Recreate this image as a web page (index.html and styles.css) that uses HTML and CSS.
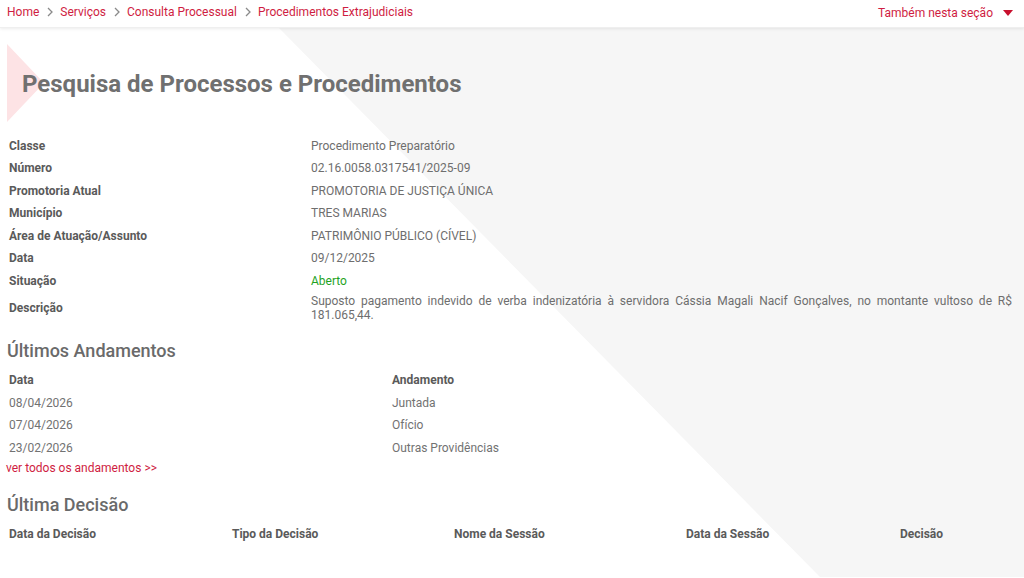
FILE: index.html
```html
<!DOCTYPE html>
<html lang="pt-BR">
<head>
<meta charset="utf-8">
<title>Pesquisa de Processos e Procedimentos</title>
<link rel="stylesheet" href="styles.css">
</head>
<body>
<header class="topbar">
  <nav class="crumbs">
    <a href="#">Home</a>
    <span class="sep"><svg width="8" height="10" viewBox="0 0 8 10"><path d="M2 1 L6 5 L2 9" fill="none" stroke="#8a8a8a" stroke-width="1.3"/></svg></span>
    <a href="#">Serviços</a>
    <span class="sep"><svg width="8" height="10" viewBox="0 0 8 10"><path d="M2 1 L6 5 L2 9" fill="none" stroke="#8a8a8a" stroke-width="1.3"/></svg></span>
    <a href="#">Consulta Processual</a>
    <span class="sep"><svg width="8" height="10" viewBox="0 0 8 10"><path d="M2 1 L6 5 L2 9" fill="none" stroke="#8a8a8a" stroke-width="1.3"/></svg></span>
    <a href="#">Procedimentos Extrajudiciais</a>
  </nav>
  <a href="#" class="section-menu">Também nesta seção<svg class="caret" width="10" height="6" viewBox="0 0 10 6"><path d="M0 0 H10 L5 6 Z" fill="#c8102e"/></svg></a>
</header>
<main class="page">
  <div class="title-block">
    <h1 class="title">Pesquisa de Processos e Procedimentos</h1>
  </div>
  <table class="details">
    <tbody>
      <tr><th>Classe</th><td>Procedimento Preparatório</td></tr>
      <tr><th>Número</th><td>02.16.0058.0317541/2025-09</td></tr>
      <tr><th>Promotoria Atual</th><td>PROMOTORIA DE JUSTIÇA ÚNICA</td></tr>
      <tr><th>Município</th><td>TRES MARIAS</td></tr>
      <tr><th>Área de Atuação/Assunto</th><td>PATRIMÔNIO PÚBLICO (CÍVEL)</td></tr>
      <tr><th>Data</th><td>09/12/2025</td></tr>
      <tr><th>Situação</th><td class="status-open">Aberto</td></tr>
      <tr class="desc-row"><th>Descrição</th><td class="justify">Suposto pagamento indevido de verba indenizatória à servidora Cássia Magali Nacif Gonçalves, no montante vultoso de R$ 181.065,44.</td></tr>
    </tbody>
  </table>

  <h2 class="section-title">Últimos Andamentos</h2>
  <table class="list andamentos">
    <thead><tr><th class="c1">Data</th><th>Andamento</th></tr></thead>
    <tbody>
      <tr><td>08/04/2026</td><td>Juntada</td></tr>
      <tr><td>07/04/2026</td><td>Ofício</td></tr>
      <tr><td>23/02/2026</td><td>Outras Providências</td></tr>
    </tbody>
  </table>
  <a href="#" class="more">ver todos os andamentos &gt;&gt;</a>

  <h2 class="section-title second">Última Decisão</h2>
  <table class="list decisao">
    <thead><tr><th class="d1">Data da Decisão</th><th class="d2">Tipo da Decisão</th><th class="d3">Nome da Sessão</th><th class="d4">Data da Sessão</th><th>Decisão</th></tr></thead>
  </table>
</main>
</body>
</html>
```
FILE: styles.css
```css
html, body {
  margin: 0;
  padding: 0;
}
body {
  font-family: Roboto, "Liberation Sans", Arial, sans-serif;
  background: #ffffff;
  color: #666666;
  height: 578px;
  overflow: hidden;
}
a { text-decoration: none; }

.topbar {
  position: relative;
  z-index: 2;
  height: 28px;
  background: #ffffff;
  box-shadow: 0 1px 3px rgba(0, 0, 0, 0.08);
  border-bottom: 1px solid #efefef;
  display: flex;
  align-items: center;
  justify-content: space-between;
  padding: 0 11px 0 7px;
  box-sizing: border-box;
}
.crumbs {
  display: flex;
  align-items: center;
  font-size: 12px;
  margin-top: -4px;
}
.crumbs a { color: #cf1d42; }
.sep {
  display: inline-flex;
  align-items: center;
  margin: 0 6px 0 7px;
}
.section-menu {
  color: #cf1d42;
  font-size: 12px;
  display: flex;
  align-items: center;
  margin-top: -2px;
}
.caret { margin-left: 10px; }

.page {
  position: relative;
  min-height: 549px;
  padding: 16px 7px 0 7px;
  box-sizing: border-box;
}
.page::before {
  content: "";
  position: absolute;
  inset: 0;
  background: #f6f6f6;
  clip-path: polygon(279px 0, 100% 0, 100% 100%, 820px 100%);
  z-index: 0;
}
.page > * { position: relative; z-index: 1; }

.title-block {
  height: 78px;
  display: flex;
  align-items: center;
  padding-left: 15px;
}
.title-block::before {
  content: "";
  position: absolute;
  left: 0;
  top: 0;
  width: 37px;
  height: 78px;
  background: #fde3e5;
  clip-path: polygon(0 0, 100% 50%, 0 100%);
}
.title {
  position: relative;
  margin: 2px 0 0 0;
  font-size: 24px;
  font-weight: 700;
  color: #707070;
  letter-spacing: 0;
}

.details {
  border-collapse: collapse;
  width: 1007px;
  margin-top: 12.5px;
  font-size: 12px;
}
.details th, .details td {
  padding: 4px 2px;
  line-height: 14.5px;
  vertical-align: middle;
  text-align: left;
}
.details th {
  width: 298px;
  font-weight: 700;
  color: #5a5a5a;
}
.details td { color: #6e6e6e; }
.details .desc-row th, .details .desc-row td { line-height: 14px; padding-top: 2px; padding-bottom: 2px; }
.justify { text-align: justify !important; }
.status-open { color: #1fa31f !important; }

.section-title {
  margin: 16px 0 7px 0;
  font-size: 18px;
  line-height: 22px;
  font-weight: 500;
  color: #6a6a6a;
}
.section-title.second { margin-top: 18px; margin-bottom: 7px; }

.list {
  border-collapse: collapse;
  width: 1010px;
  font-size: 12px;
}
.list th, .list td {
  padding: 4px 2px;
  line-height: 14.5px;
  text-align: left;
  vertical-align: middle;
}
.list th { font-weight: 700; color: #5a5a5a; }
.list td { color: #727272; }
.andamentos .c1 { width: 379px; }
.decisao .d1 { width: 219px; }
.decisao .d2 { width: 218px; }
.decisao .d3 { width: 228px; }
.decisao .d4 { width: 210px; }

.more {
  display: block;
  font-size: 12px;
  line-height: 16px;
  color: #cf1d42;
  margin: 1px 0 0 -1px;
}
```
